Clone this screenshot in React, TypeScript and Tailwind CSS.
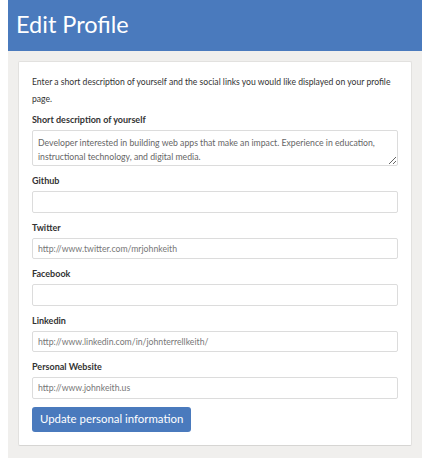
import { useState } from "react";

const fields = [
  { label: "Github", value: "" },
  { label: "Twitter", value: "http://www.twitter.com/mrjohnkeith" },
  { label: "Facebook", value: "" },
  { label: "Linkedin", value: "http://www.linkedin.com/in/johnterrellkeith/" },
  { label: "Personal Website", value: "http://www.johnkeith.us" },
];

export default function App() {
  const [bio, setBio] = useState(
    "Developer interested in building web apps that make an impact. Experience in education, instructional technology, and digital media.",
  );
  const [links, setLinks] = useState(fields.map((f) => f.value));

  return (
    <div
      className="w-[430px] h-[458px] bg-white"
      style={{ fontFamily: "Lato, 'Open Sans', sans-serif" }}
    >
      <div className="ml-2 w-[414px] h-full bg-[#f0efed]">
        {/* Cabeçalho */}
        <header className="h-[51px] bg-[#4a7abd] px-2 flex items-center">
          <h1 className="text-[23.5px] text-white leading-none pb-[2px]">
            Edit Profile
          </h1>
        </header>

        <div className="px-[10px] pt-[10px]">
          <form
            className="bg-white border border-[#e2e1df] border-b-[#d6d5d3] rounded-[2px] px-[13px] pt-[12px] pb-[13px] text-[#333]"
            onSubmit={(e) => e.preventDefault()}
          >
            <p className="text-[8.6px] leading-[17px] mb-[4px]">
              Enter a short description of yourself and the social links you
              would like displayed on your profile page.
            </p>

            <label className="block text-[9px] font-bold leading-4 mb-[2px]">
              Short description of yourself
            </label>
            <textarea
              value={bio}
              onChange={(e) => setBio(e.target.value)}
              className="block w-full h-[36px] border border-[#dcdcdc] rounded-[2px] px-[5px] py-[5px] text-[8.7px] leading-[14px] text-[#666] outline-none"
            />

            {fields.map((f, i) => (
              <div key={f.label} className="mt-[7px]">
                <label className="block text-[9px] font-bold leading-4 mb-[2px]">
                  {f.label}
                </label>
                <input
                  value={links[i]}
                  onChange={(e) =>
                    setLinks((prev) =>
                      prev.map((v, j) => (j === i ? e.target.value : v)),
                    )
                  }
                  className="block w-full h-[21.5px] border border-[#dcdcdc] rounded-[2px] px-[5px] text-[8.7px] text-[#777] outline-none"
                />
              </div>
            ))}

            <button
              type="submit"
              className="mt-[8px] h-[25px] px-[8px] bg-[#4a7abd] rounded-[3px] text-white text-[11.4px] leading-none"
            >
              Update personal information
            </button>
          </form>
        </div>
      </div>
    </div>
  );
}
